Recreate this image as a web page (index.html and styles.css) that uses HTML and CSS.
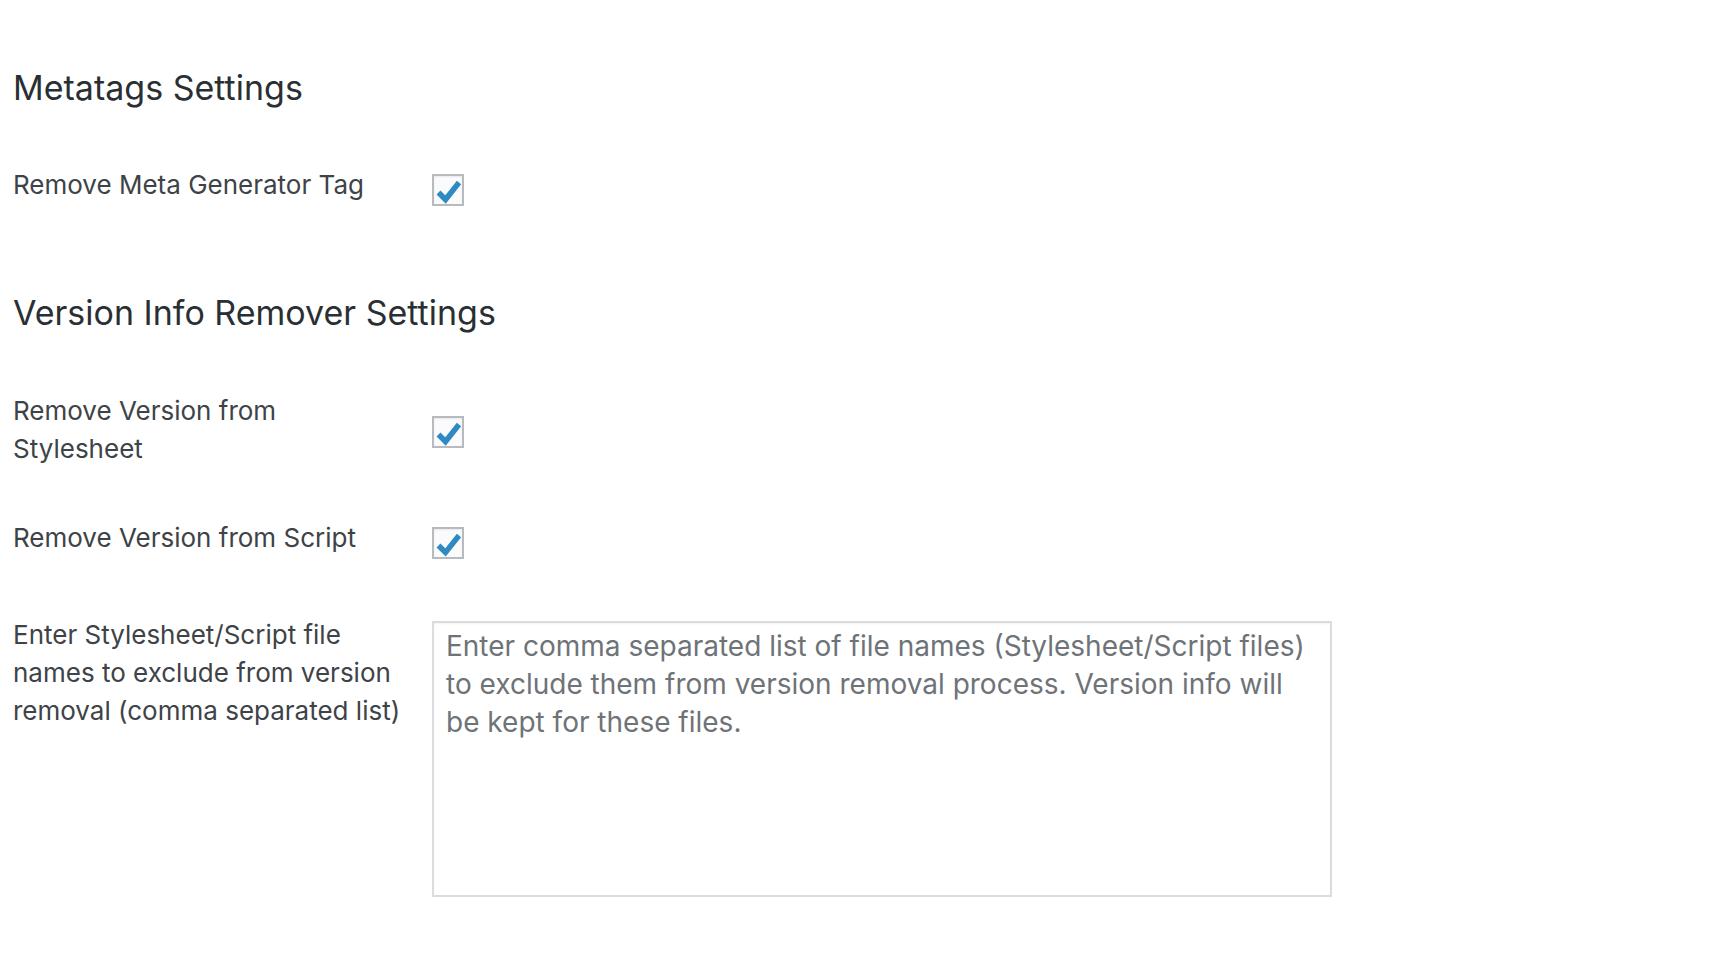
FILE: index.html
```html
<!DOCTYPE html>
<html lang="en">
<head>
<meta charset="utf-8">
<title>Settings</title>
<link rel="stylesheet" href="styles.css">
</head>
<body>
<div class="page">
  <h2 class="section-title first">Metatags Settings</h2>
  <div class="row row-single row-first">
    <div class="label">Remove Meta Generator Tag</div>
    <span class="checkbox" role="checkbox" aria-checked="true">
      <svg viewBox="0 0 32 32" width="32" height="32"><polyline points="6.5,18.5 13.5,25.5 27,8.5" fill="none" stroke="#2f89c3" stroke-width="5.5" stroke-linejoin="miter"/></svg>
    </span>
  </div>

  <h2 class="section-title second">Version Info Remover Settings</h2>
  <div class="row row-double row-after-title">
    <div class="label">Remove Version from Stylesheet</div>
    <span class="checkbox" role="checkbox" aria-checked="true">
      <svg viewBox="0 0 32 32" width="32" height="32"><polyline points="6.5,18.5 13.5,25.5 27,8.5" fill="none" stroke="#2f89c3" stroke-width="5.5" stroke-linejoin="miter"/></svg>
    </span>
  </div>
  <div class="row row-single row-gap">
    <div class="label">Remove Version from Script</div>
    <span class="checkbox" role="checkbox" aria-checked="true">
      <svg viewBox="0 0 32 32" width="32" height="32"><polyline points="6.5,18.5 13.5,25.5 27,8.5" fill="none" stroke="#2f89c3" stroke-width="5.5" stroke-linejoin="miter"/></svg>
    </span>
  </div>
  <div class="row row-textarea">
    <div class="label">Enter Stylesheet/Script file names to exclude from version removal (comma separated list)</div>
    <textarea class="exclude">Enter comma separated list of file names (Stylesheet/Script files) to exclude them from version removal process. Version info will be kept for these files.</textarea>
  </div>
</div>
</body>
</html>
```

FILE: styles.css
```css
html, body {
  margin: 0;
  padding: 0;
  background: #ffffff;
}

body {
  font-family: Inter, "Liberation Sans", Arial, sans-serif;
  color: #32373c;
}

.page {
  padding: 66px 13px 0 13px;
}

.section-title {
  margin: 0;
  font-size: 34px;
  line-height: 44px;
  font-weight: 400;
  color: #2a2f34;
}

.section-title.second {
  margin-top: 85px;
}

.row {
  display: flex;
  align-items: flex-start;
}

.row-first {
  margin-top: 56px;
}

.row-after-title {
  margin-top: 57px;
}

.row-gap {
  margin-top: 51px;
}

.row-textarea {
  margin-top: 57px;
}

.label {
  width: 400px;
  padding-right: 19px;
  flex: none;
  font-size: 26px;
  line-height: 38px;
  color: #3e4348;
}

.checkbox {
  display: block;
  box-sizing: border-box;
  width: 32px;
  height: 32px;
  border: 2px solid #b7bbbf;
  background: #fbfbfb;
  box-shadow: inset 0 1px 2px rgba(0, 0, 0, 0.08);
  position: relative;
}

.checkbox svg {
  position: absolute;
  left: -2px;
  top: -2px;
}

.row-single .checkbox {
  margin-top: 8px;
}

.row-double .checkbox {
  margin-top: 24px;
}

.exclude {
  margin: 5px 0 0 0;
  box-sizing: border-box;
  width: 900px;
  height: 276px;
  border: 2px solid #dcdcdc;
  padding: 4px 12px;
  font-family: Inter, "Liberation Sans", Arial, sans-serif;
  font-size: 28px;
  line-height: 38px;
  color: #6e7378;
  resize: none;
  outline: none;
  box-shadow: inset 0 1px 2px rgba(0, 0, 0, 0.05);
  overflow: hidden;
}
```
